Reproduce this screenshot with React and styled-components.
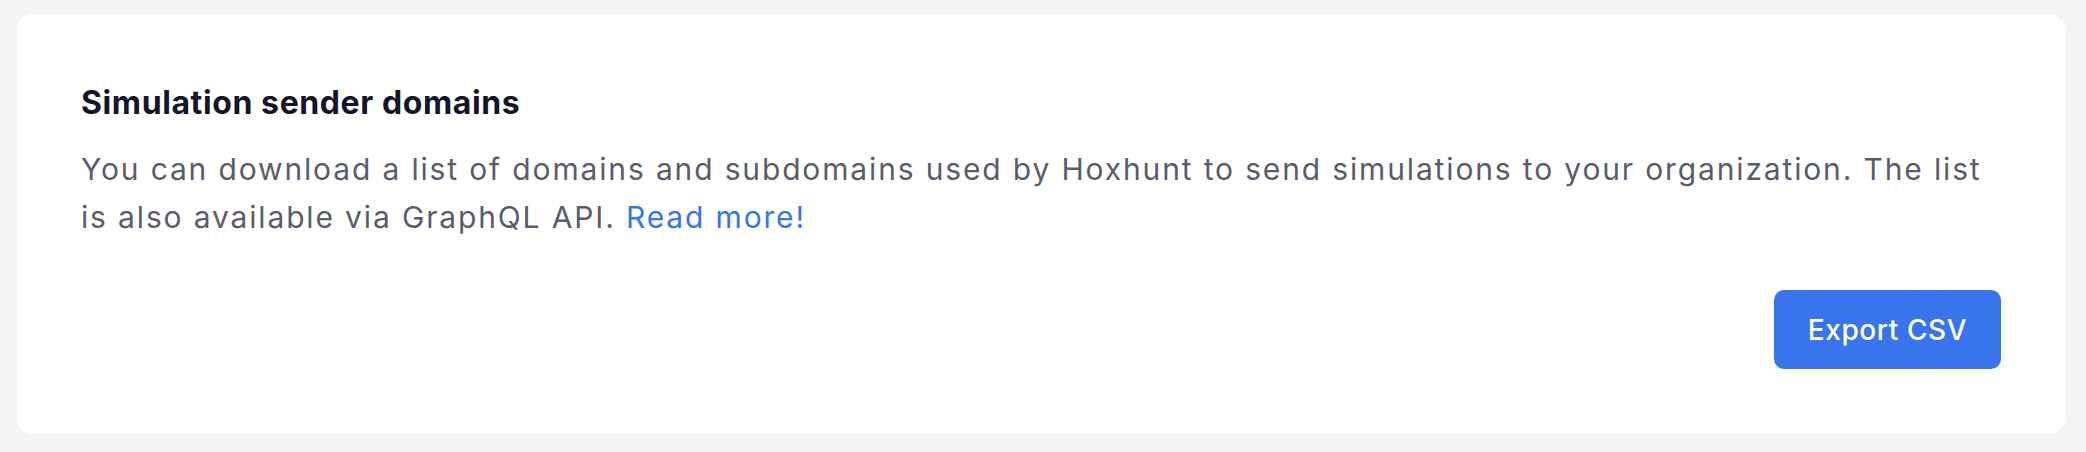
import React from 'react';
import styled, { createGlobalStyle } from 'styled-components';

const GlobalStyle = createGlobalStyle`
  * { box-sizing: border-box; }
  body {
    margin: 0;
    background: #f3f4f6;
    font-family: Inter, "Noto Sans", sans-serif;
  }
`;

const Page = styled.div`
  padding: 14px 21px 18px 17px;
`;

const Card = styled.section`
  background: #ffffff;
  border-radius: 16px;
  padding: 69px 64px 65px;
  display: flex;
  flex-direction: column;
`;

const Title = styled.h2`
  margin: 0;
  font-size: 32px;
  line-height: 40px;
  font-weight: 700;
  letter-spacing: 0.6px;
  color: #14142b;
`;

const Description = styled.p`
  margin: 22px 0 0;
  font-size: 30px;
  line-height: 48px;
  font-weight: 400;
  color: #5b5c6b;
  letter-spacing: 1.85px;
`;

const Link = styled.a`
  color: #3874ec;
  text-decoration: none;
  cursor: pointer;
`;

const Actions = styled.div`
  display: flex;
  justify-content: flex-end;
  margin-top: 49px;
`;

const Button = styled.button`
  width: 227px;
  height: 79px;
  border: none;
  border-radius: 10px;
  background: #3874ec;
  color: #ffffff;
  font-family: inherit;
  font-size: 28px;
  font-weight: 500;
  letter-spacing: 0.6px;
  cursor: pointer;
`;

export default function App() {
  return (
    <>
      <GlobalStyle />
      <Page>
        <Card>
          <Title>Simulation sender domains</Title>
          <Description>
            You can download a list of domains and subdomains used by Hoxhunt to send
            simulations to your organization. The list is also available via GraphQL API.{' '}
            <Link>Read more!</Link>
          </Description>
          <Actions>
            <Button>Export CSV</Button>
          </Actions>
        </Card>
      </Page>
    </>
  );
}
